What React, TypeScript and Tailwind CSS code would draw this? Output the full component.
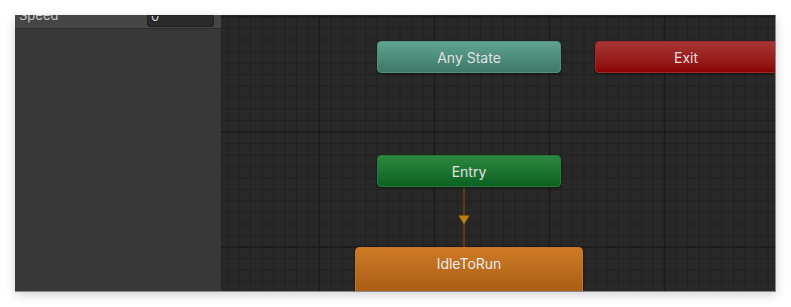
import React from "react";

const GRID_W = 554;
const GRID_H = 276;

const Grid: React.FC = () => {
  const minorX: number[] = [];
  const minorY: number[] = [];
  for (let x = 6.5; x < GRID_W; x += 11.5) minorX.push(x);
  for (let y = 2; y < GRID_H; y += 11.5) minorY.push(y);
  const majorX = [98.5, 213.5, 328.5, 443.5];
  const majorY = [2, 117, 232];

  return (
    <svg
      className="absolute inset-0"
      width={GRID_W}
      height={GRID_H}
      viewBox={`0 0 ${GRID_W} ${GRID_H}`}
    >
      {minorX.map((x) => (
        <line key={"vx" + x} x1={x} x2={x} y1={0} y2={GRID_H} stroke="#212121" strokeWidth={1} />
      ))}
      {minorY.map((y) => (
        <line key={"hy" + y} x1={0} x2={GRID_W} y1={y} y2={y} stroke="#212121" strokeWidth={1} />
      ))}
      {majorX.map((x) => (
        <line key={"mx" + x} x1={x} x2={x} y1={0} y2={GRID_H} stroke="#1b1b1b" strokeWidth={1.4} />
      ))}
      {majorY.map((y) => (
        <line key={"my" + y} x1={0} x2={GRID_W} y1={y} y2={y} stroke="#1b1b1b" strokeWidth={1.4} />
      ))}
      {/* Entry -> IdleToRun transition */}
      <line x1={243} x2={243} y1={172} y2={232} stroke="#5e3d0c" strokeWidth={2} />
      <polygon points="237.5,200.5 248.5,200.5 243,209.5" fill="#b97b12" />
    </svg>
  );
};

export default function App() {
  return (
    <div
      className="w-[791px] h-[307px] bg-white pt-[15px] pl-[15px]"
      style={{ fontFamily: "Inter, 'Noto Sans', sans-serif" }}
    >
      <div className="w-[761px] h-[277px] flex overflow-hidden border-r border-b border-[#8a8a8a] shadow-[0_3px_10px_rgba(0,0,0,0.18)]">
        {/* inspector / parameters panel */}
        <div className="w-[206px] bg-[#383838] flex flex-col shrink-0">
          <div className="h-[14px] bg-[#454545] border-b border-[#2c2c2c] flex items-end justify-between overflow-hidden">
            <span className="text-[13px] leading-none text-[#c8c8c8] pl-[4px] mb-[6px]">Speed</span>
            <div className="w-[67px] h-[12px] mr-[7px] mb-[1px] bg-[#2a2a2a] border border-[#212121] rounded-b-[3px] flex items-end overflow-hidden">
              <span className="text-[13px] leading-none text-[#d2d2d2] pl-[3px] mb-[3px]">0</span>
            </div>
          </div>
        </div>

        {/* animator graph */}
        <div className="relative w-[554px] h-[276px] bg-[#282828] overflow-hidden">
          <Grid />

          <div className="absolute left-[156px] top-[26px] w-[184px] h-[32px] rounded-[4px] border border-[#558f80] bg-gradient-to-b from-[#5fa390] to-[#3e7869] shadow-[0_1px_2px_rgba(0,0,0,0.5)] flex items-center justify-center">
            <span className="text-[14px] text-[#e2e2e2]">Any State</span>
          </div>

          <div className="absolute left-[374px] top-[26px] w-[200px] h-[32px] rounded-[4px] border border-[#9a2a2a] bg-gradient-to-b from-[#a63434] to-[#8c0202] shadow-[0_1px_2px_rgba(0,0,0,0.5)] flex items-center pl-[78px]">
            <span className="text-[14px] text-[#e6dcdc]">Exit</span>
          </div>

          <div className="absolute left-[156px] top-[140px] w-[184px] h-[32px] rounded-[4px] border border-[#257a38] bg-gradient-to-b from-[#2b8840] to-[#0b6221] shadow-[0_1px_2px_rgba(0,0,0,0.5)] flex items-center justify-center pt-[1px]">
            <span className="text-[14px] text-[#e2e2e2]">Entry</span>
          </div>

          <div className="absolute left-[134px] top-[232px] w-[228px] h-[50px] rounded-[4px] border border-[#c4772a] bg-gradient-to-b from-[#cd7a25] to-[#a65b12] shadow-[0_1px_2px_rgba(0,0,0,0.5)] flex justify-center pt-[7px]">
            <span className="text-[14px] leading-[18px] text-[#ececec]">IdleToRun</span>
          </div>
        </div>
      </div>
    </div>
  );
}
